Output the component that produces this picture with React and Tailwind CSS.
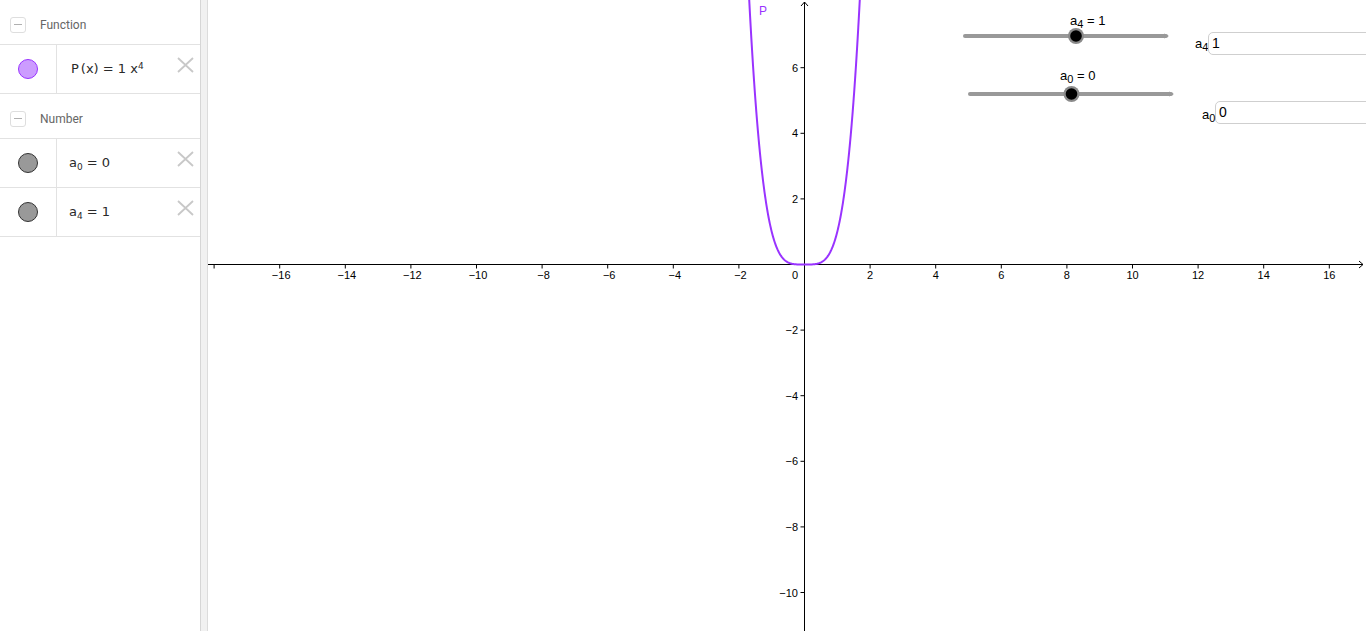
import React from 'react';

// graph geometry (canvas coords, canvas starts at x=208 of the page)
const S = 32.8;
const OX = 596.5;
const OY = 264.5;
const W = 1158;
const H = 631;

const px = (x) => OX + x * S;
const py = (y) => OY - y * S;

const X_TICKS = [-18, -16, -14, -12, -10, -8, -6, -4, -2, 2, 4, 6, 8, 10, 12, 14, 16];
const Y_TICKS = [-10, -8, -6, -4, -2, 2, 4, 6];
const PURPLE = '#9933ff';

const fmt = (n) => (n < 0 ? `\u2212${-n}` : `${n}`);

const curvePath = () => {
  const pts = [];
  for (let i = -180; i <= 180; i++) {
    const x = i / 100;
    pts.push(`${px(x).toFixed(2)},${py(x ** 4).toFixed(2)}`);
  }
  return 'M' + pts.join(' L');
};

const CollapseButton = () => (
  <div className="w-[16px] h-[16px] rounded-[3px] border border-[#dedede] flex items-center justify-center">
    <div className="w-[8px] h-[1.5px] bg-[#b0b0b0]" />
  </div>
);

const GroupHeader = ({ label }) => (
  <div className="h-[45px] border-b border-[#e2e2e2] flex items-center pl-[10px] pt-[5px]">
    <CollapseButton />
    <span className="ml-[14px] text-[12px] text-[#666] font-['Roboto',sans-serif]">{label}</span>
  </div>
);

const DeleteIcon = () => (
  <svg width="17" height="16" viewBox="0 0 17 16" className="self-start mt-[12px] mr-[6px] ml-auto">
    <path d="M1 1 L16 15 M16 1 L1 15" stroke="#c8c8c8" strokeWidth="1.8" fill="none" />
  </svg>
);

const ItemRow = ({ marker, children, textPad = 'pl-[12px]' }) => (
  <div className="h-[49px] border-b border-[#e2e2e2] flex">
    <div className="w-[57px] shrink-0 border-r border-[#e2e2e2] flex items-center justify-center pr-px">
      {marker}
    </div>
    <div className={`flex items-center ${textPad} text-[13px] text-[#2a2a2a] font-['DejaVu_Sans',sans-serif]`}>
      {children}
    </div>
    <DeleteIcon />
  </div>
);

const Sub = ({ children }) => <sub className="text-[9px]">{children}</sub>;

const AlgebraPanel = () => (
  <div className="w-[201px] shrink-0 border-r border-[#d6d6d6] bg-white h-full">
    <GroupHeader label="Function" />
    <ItemRow
      textPad="pl-[14px]"
      marker={<div className="w-[20px] h-[20px] rounded-full bg-[#cc9cff] border border-[#9933ff]" />}
    >
      <span>
        P<span className="ml-[2px]">(x)</span> = 1 x<sup className="text-[9px]">4</sup>
      </span>
    </ItemRow>
    <GroupHeader label="Number" />
    <ItemRow marker={<div className="w-[20px] h-[20px] rounded-full bg-[#999] border border-[#333]" />}>
      <span>
        a<Sub>0</Sub> = 0
      </span>
    </ItemRow>
    <ItemRow marker={<div className="w-[20px] h-[20px] rounded-full bg-[#999] border border-[#333]" />}>
      <span>
        a<Sub>4</Sub> = 1
      </span>
    </ItemRow>
  </div>
);

const Slider = ({ x1, x2, y, knob }) => (
  <g>
    <line x1={x1} y1={y} x2={x2 - 3} y2={y} stroke="#999" strokeWidth="4" strokeLinecap="round" />
    <path d={`M${x2 - 5} ${y - 2.5} L${x2} ${y} L${x2 - 5} ${y + 2.5} Z`} fill="#999" />
    <circle cx={knob} cy={y} r="8" fill="#8a8a8a" />
    <circle cx={knob} cy={y} r="5.8" fill="#000" />
  </g>
);

const GraphView = () => (
  <div className="relative flex-1 h-full overflow-hidden bg-white border-l border-[#dcdcdc]">
    <svg width={W} height={H} className="absolute left-0 top-0" fontFamily="'Liberation Sans', Arial, sans-serif">
      {/* x axis */}
      <line x1="0" y1={OY} x2={W - 3} y2={OY} stroke="#000" strokeWidth="1" />
      <path d={`M${W - 7} ${OY - 3.5} L${W - 3} ${OY} L${W - 7} ${OY + 3.5}`} stroke="#000" fill="none" />
      {/* y axis */}
      <line x1={OX} y1="2" x2={OX} y2={H} stroke="#000" strokeWidth="1" />
      <path d={`M${OX - 3.5} 6 L${OX} 2 L${OX + 3.5} 6`} stroke="#000" fill="none" />

      {X_TICKS.map((t) => (
        <g key={`x${t}`}>
          <line x1={px(t)} y1={OY} x2={px(t)} y2={OY + 4} stroke="#000" />
          {t > -18 && (
            <text x={px(t) + (t < 0 ? 1.5 : 0)} y="279" fontSize="11" textAnchor="middle" fill="#000">
              {fmt(t)}
            </text>
          )}
        </g>
      ))}
      {Y_TICKS.map((t) => (
        <g key={`y${t}`}>
          <line x1={OX - 4} y1={py(t)} x2={OX} y2={py(t)} stroke="#000" />
          <text x={OX - 6.5} y={py(t) + 4} fontSize="11" textAnchor="end" fill="#000">
            {fmt(t)}
          </text>
        </g>
      ))}
      <text x={OX - 6.5} y="279" fontSize="11" textAnchor="end" fill="#000">0</text>

      {/* P(x) = x^4 */}
      <path d={curvePath()} stroke={PURPLE} strokeWidth="2" fill="none" />
      <text x="551" y="15" fontSize="12" fill={PURPLE}>P</text>

      <Slider x1={757} x2={961} y={36} knob={868} />
      <Slider x1={762} x2={966} y={94} knob={863.5} />
    </svg>

    {/* slider captions */}
    <div className="absolute left-[862px] top-[14px] text-[13px] leading-[13px] text-black font-['Liberation_Sans',sans-serif] whitespace-nowrap">
      a<sub className="text-[11px]">4</sub> = 1
    </div>
    <div className="absolute left-[852px] top-[69px] text-[13px] leading-[13px] text-black font-['Liberation_Sans',sans-serif] whitespace-nowrap">
      a<sub className="text-[11px]">0</sub> = 0
    </div>

    {/* input boxes */}
    <div className="absolute left-[987px] top-[37px] text-[13px] leading-[13px] text-black font-['Liberation_Sans',sans-serif]">
      a<sub className="text-[11px]">4</sub>
    </div>
    <div className="absolute left-[1000px] top-[32px] w-[220px] h-[23px] rounded-[5px] border border-[#cfcfcf] bg-white pl-[3px] text-[14px] leading-[21px] text-black font-['Liberation_Sans',sans-serif]">
      1
    </div>
    <div className="absolute left-[1007px] top-[101px] w-[220px] h-[23px] rounded-[5px] border border-[#cfcfcf] bg-white pl-[3px] text-[14px] leading-[21px] text-black font-['Liberation_Sans',sans-serif]">
      0
    </div>
    <div className="absolute left-[994px] top-[108px] text-[13px] leading-[13px] text-black font-['Liberation_Sans',sans-serif]">
      a<sub className="text-[11px]">0</sub>
    </div>
  </div>
);

export default function App() {
  return (
    <div className="w-[1366px] h-[631px] flex bg-white overflow-hidden">
      <AlgebraPanel />
      <div className="w-[6px] shrink-0 bg-[#f1f1f1]" />
      <GraphView />
    </div>
  );
}
